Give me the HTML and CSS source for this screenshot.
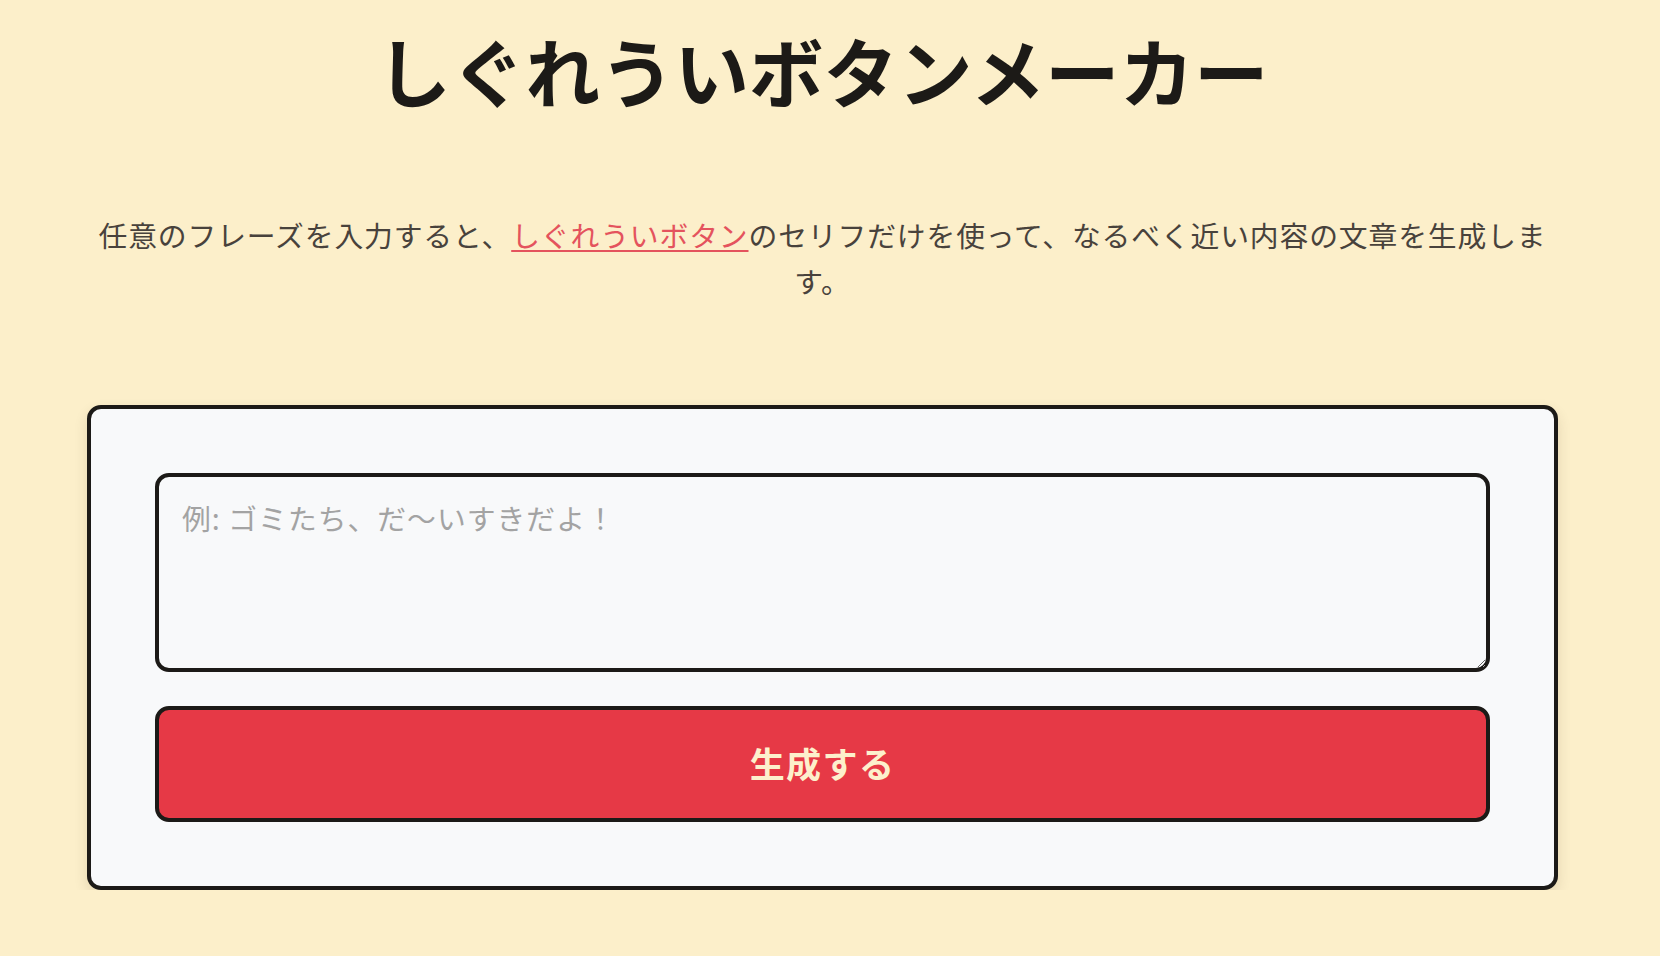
FILE: index.html
```html
<!DOCTYPE html>
<html lang="ja">
<head>
<meta charset="utf-8">
<title>しぐれういボタンメーカー</title>
<link rel="stylesheet" href="styles.css">
</head>
<body>
<main class="page">
  <h1 class="title">しぐれういボタンメーカー</h1>
  <p class="lead">任意のフレーズを入力すると、<a class="lead-link" href="#">しぐれういボタン</a>のセリフだけを使って、なるべく近い内容の文章を生成します。</p>
  <form class="card">
    <textarea class="phrase" placeholder="例: ゴミたち、だ〜いすきだよ！"></textarea>
    <button class="generate" type="button">生成する</button>
  </form>
</main>
</body>
</html>
```

FILE: styles.css
```css
html, body {
  margin: 0;
}

body {
  background: #fcefca;
  color: #1c1a17;
  font-family: "Noto Sans CJK JP", "Noto Sans", sans-serif;
  padding-right: 15px;
}

.page {
  width: 1471px;
  margin: 0 auto;
  padding-top: 25px;
}

.title {
  margin: 0;
  font-size: 74.5px;
  line-height: 1.2;
  font-weight: 700;
  text-align: center;
  color: #1c1a17;
}

.lead {
  margin: 98px 0 0;
  font-size: 28.8px;
  line-height: 1.6;
  letter-spacing: 0.03em;
  text-align: center;
  color: #48423c;
}

.lead-link {
  color: #e4535d;
  text-decoration: underline;
  text-decoration-thickness: 2px;
  text-underline-offset: 3px;
}

.card {
  margin-top: 100px;
  background: #f8f9fa;
  border: 4px solid #1c1a17;
  border-radius: 14px;
  padding: 64px;
  display: flex;
  flex-direction: column;
  gap: 34px;
  box-shadow: 0 6px 14px rgba(60, 40, 0, 0.12);
}

.phrase {
  box-sizing: border-box;
  height: 199px;
  padding: 19px 23px;
  border: 4px solid #1c1a17;
  border-radius: 14px;
  background: #f8f9fa;
  color: #1c1a17;
  font-family: inherit;
  font-size: 28.8px;
  line-height: 1.5;
  letter-spacing: 0.035em;
  resize: vertical;
  outline: none;
}

.phrase::placeholder {
  color: #a3a3a3;
}

.generate {
  box-sizing: border-box;
  padding: 27.8px;
  border: 4px solid #1c1a17;
  border-radius: 14px;
  background: #e63946;
  color: #fdf0cc;
  font-family: inherit;
  font-size: 35px;
  font-weight: 700;
  line-height: 1.5;
  letter-spacing: 0.04em;
  cursor: pointer;
}
```
